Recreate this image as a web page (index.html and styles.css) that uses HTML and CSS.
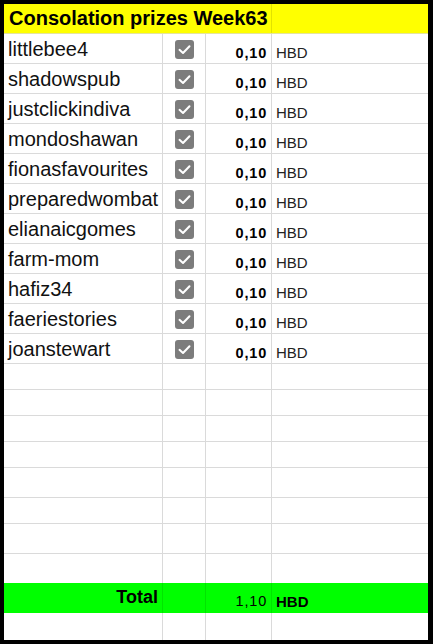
FILE: index.html
```html
<!DOCTYPE html>
<html>
<head>
<meta charset="utf-8">
<link rel="stylesheet" href="styles.css">
</head>
<body>
<div class="sheet">
  <div class="row header">
    <div class="title">Consolation prizes Week63</div>
    <div class="cell"></div>
  </div>

  <div class="row data"><div class="cell name">littlebee4</div><div class="cell chk"><span class="box"><svg viewBox="0 0 19 19"><polyline points="4.5,9.8 8,13 14.5,6.2"/></svg></span></div><div class="cell num">0,10</div><div class="cell cur">HBD</div></div>
  <div class="row data"><div class="cell name">shadowspub</div><div class="cell chk"><span class="box"><svg viewBox="0 0 19 19"><polyline points="4.5,9.8 8,13 14.5,6.2"/></svg></span></div><div class="cell num">0,10</div><div class="cell cur">HBD</div></div>
  <div class="row data"><div class="cell name">justclickindiva</div><div class="cell chk"><span class="box"><svg viewBox="0 0 19 19"><polyline points="4.5,9.8 8,13 14.5,6.2"/></svg></span></div><div class="cell num">0,10</div><div class="cell cur">HBD</div></div>
  <div class="row data"><div class="cell name">mondoshawan</div><div class="cell chk"><span class="box"><svg viewBox="0 0 19 19"><polyline points="4.5,9.8 8,13 14.5,6.2"/></svg></span></div><div class="cell num">0,10</div><div class="cell cur">HBD</div></div>
  <div class="row data"><div class="cell name">fionasfavourites</div><div class="cell chk"><span class="box"><svg viewBox="0 0 19 19"><polyline points="4.5,9.8 8,13 14.5,6.2"/></svg></span></div><div class="cell num">0,10</div><div class="cell cur">HBD</div></div>
  <div class="row data"><div class="cell name">preparedwombat</div><div class="cell chk"><span class="box"><svg viewBox="0 0 19 19"><polyline points="4.5,9.8 8,13 14.5,6.2"/></svg></span></div><div class="cell num">0,10</div><div class="cell cur">HBD</div></div>
  <div class="row data"><div class="cell name">elianaicgomes</div><div class="cell chk"><span class="box"><svg viewBox="0 0 19 19"><polyline points="4.5,9.8 8,13 14.5,6.2"/></svg></span></div><div class="cell num">0,10</div><div class="cell cur">HBD</div></div>
  <div class="row data"><div class="cell name">farm-mom</div><div class="cell chk"><span class="box"><svg viewBox="0 0 19 19"><polyline points="4.5,9.8 8,13 14.5,6.2"/></svg></span></div><div class="cell num">0,10</div><div class="cell cur">HBD</div></div>
  <div class="row data"><div class="cell name">hafiz34</div><div class="cell chk"><span class="box"><svg viewBox="0 0 19 19"><polyline points="4.5,9.8 8,13 14.5,6.2"/></svg></span></div><div class="cell num">0,10</div><div class="cell cur">HBD</div></div>
  <div class="row data"><div class="cell name">faeriestories</div><div class="cell chk"><span class="box"><svg viewBox="0 0 19 19"><polyline points="4.5,9.8 8,13 14.5,6.2"/></svg></span></div><div class="cell num">0,10</div><div class="cell cur">HBD</div></div>
  <div class="row data"><div class="cell name">joanstewart</div><div class="cell chk"><span class="box"><svg viewBox="0 0 19 19"><polyline points="4.5,9.8 8,13 14.5,6.2"/></svg></span></div><div class="cell num">0,10</div><div class="cell cur">HBD</div></div>

  <div class="row h26"><div class="cell"></div><div class="cell"></div><div class="cell"></div><div class="cell"></div></div>
  <div class="row h26"><div class="cell"></div><div class="cell"></div><div class="cell"></div><div class="cell"></div></div>
  <div class="row h26"><div class="cell"></div><div class="cell"></div><div class="cell"></div><div class="cell"></div></div>
  <div class="row h26"><div class="cell"></div><div class="cell"></div><div class="cell"></div><div class="cell"></div></div>
  <div class="row h30"><div class="cell"></div><div class="cell"></div><div class="cell"></div><div class="cell"></div></div>
  <div class="row h26"><div class="cell"></div><div class="cell"></div><div class="cell"></div><div class="cell"></div></div>
  <div class="row h30"><div class="cell"></div><div class="cell"></div><div class="cell"></div><div class="cell"></div></div>
  <div class="row h29 noline"><div class="cell"></div><div class="cell"></div><div class="cell"></div><div class="cell"></div></div>

  <div class="row total">
    <div class="cell tlabel">Total</div>
    <div class="cell"></div>
    <div class="cell tnum">1,10</div>
    <div class="cell tcur">HBD</div>
  </div>

  <div class="row h27 last"><div class="cell"></div><div class="cell"></div><div class="cell"></div><div class="cell"></div></div>
</div>
</body>
</html>
```

FILE: styles.css
```css
* { box-sizing: border-box; }

html, body {
  margin: 0;
  padding: 0;
  background: #000;
}

body {
  padding: 4px 5px 4px 4px;
  font-family: "Liberation Sans", Arial, sans-serif;
  color: #000;
}

.sheet {
  width: 424px;
  height: 636px;
  background: #fff;
  display: flex;
  flex-direction: column;
}

.row {
  display: grid;
  grid-template-columns: 159px 43px 66px 156px;
  border-bottom: 1px solid #dadada;
  flex: none;
}

.cell {
  border-right: 1px solid #dadada;
  white-space: nowrap;
  overflow: hidden;
}

.cell:last-child {
  border-right: none;
}

/* header */
.header {
  height: 30px;
  background: #ffff00;
  border-bottom: 1px solid #e4e4a0;
}

.title {
  grid-column: span 3;
  border-right: 1px solid #e2e200;
  font-weight: bold;
  font-size: 20px;
  line-height: 23px;
  padding: 3px 0 0 5px;
  white-space: nowrap;
}

/* data rows */
.data {
  height: 30px;
}

.name {
  font-size: 20px;
  line-height: 23px;
  padding: 4px 0 0 4px;
  color: #111;
}

.chk {
  display: flex;
  justify-content: center;
  padding-top: 6px;
}

.box {
  width: 19px;
  height: 19px;
  border-radius: 3px;
  background: #7c7c7c;
  display: block;
}

.box svg {
  width: 19px;
  height: 19px;
  display: block;
}

.box polyline {
  fill: none;
  stroke: #fff;
  stroke-width: 2;
  stroke-linecap: round;
  stroke-linejoin: round;
}

.num {
  font-size: 14.5px;
  font-weight: bold;
  line-height: 16px;
  letter-spacing: 0.8px;
  text-align: right;
  padding: 10.5px 4px 0 0;
}

.cur {
  font-size: 15px;
  line-height: 17px;
  padding: 10px 0 0 4px;
  color: #222;
}

/* empty rows */
.h26 { height: 26px; }
.h27 { height: 27px; }
.h29 { height: 29px; }
.h30 { height: 30px; }
.noline { border-bottom: none; }
.last { border-bottom: none; }

/* total row */
.total {
  height: 30px;
  background: #00ff00;
  border-bottom: none;
}

.total .cell {
  border-right-color: rgba(0, 0, 0, 0.1);
}

.total .cell:last-child {
  border-right: none;
}

.tlabel {
  font-size: 18px;
  font-weight: bold;
  line-height: 21px;
  text-align: right;
  padding: 4px 4px 0 0;
}

.tnum {
  font-size: 14.5px;
  line-height: 16px;
  letter-spacing: 0.8px;
  text-align: right;
  color: #000;
  padding: 10px 4px 0 0;
}

.tcur {
  font-size: 15px;
  font-weight: bold;
  line-height: 17px;
  padding: 9.5px 0 0 4px;
}
```
